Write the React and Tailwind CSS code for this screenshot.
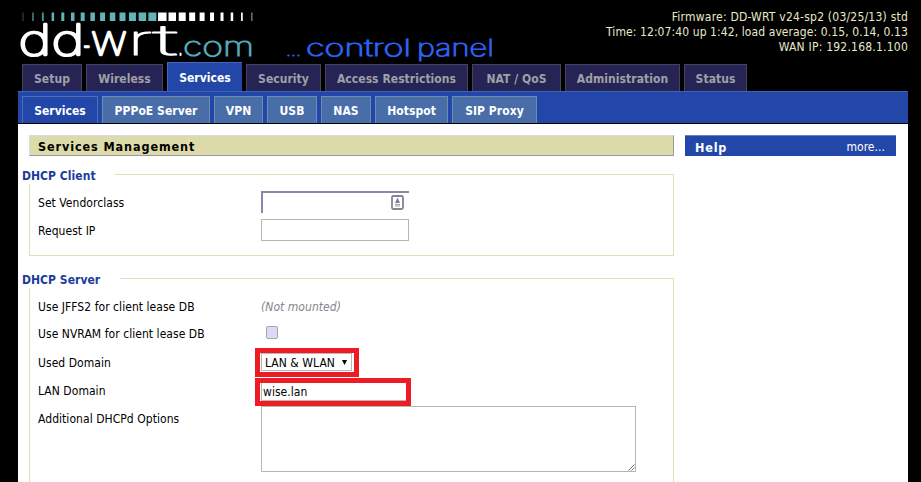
import React from "react";

const tabs = [
  ["Setup", "w-[60px]"],
  ["Wireless", "w-[77px]"],
  ["Services", "w-[75px]"],
  ["Security", "w-[75px]"],
  ["Access Restrictions", "w-[143px]"],
  ["NAT / QoS", "w-[89px]"],
  ["Administration", "w-[115px]"],
  ["Status", "w-[63px]"],
];

const subTabs = [
  ["Services", "w-[76px]"],
  ["PPPoE Server", "w-[108px]"],
  ["VPN", "w-[49px]"],
  ["USB", "w-[50px]"],
  ["NAS", "w-[50px]"],
  ["Hotspot", "w-[73px]"],
  ["SIP Proxy", "w-[85px]"],
];

// Bar widths of the strip above the wordmark, evenly pitched.
const bars = [1, 1.5, 2, 2.5, 3, 3.5, 4, 4.5, 5, 5.5, 6, 7, 7.5, 8, 8.5, 7.5, 7, 6, 5, 4, 3, 2.5, 1.7, 1.5];

function Logo() {
  return (
    <svg width="500" height="62" viewBox="0 0 500 62" className="shrink-0 overflow-visible" fontFamily="Inter, 'Liberation Sans', sans-serif" fontWeight="100">
      {bars.map((w, i) => (
        <rect
          key={i}
          x={23 + i * 9.95 - w / 2}
          y="12.5"
          width={w}
          height="8.5"
          fill={i < 14 ? "#62b4b8" : "#ffffff"}
          opacity={i === 0 || i === 23 ? 0.45 : i < 3 ? 0.75 : 1}
        />
      ))}
      <g fill="#fff" stroke="#fff" strokeWidth="2.3" strokeLinejoin="round">
        <text x="18.5" y="55" fontSize="41.5" textLength="66" lengthAdjust="spacingAndGlyphs">dd</text>
        <text x="83" y="56" fontSize="30" textLength="7.5" lengthAdjust="spacingAndGlyphs">-</text>
        <text x="91" y="55" fontSize="41.5" textLength="36" lengthAdjust="spacingAndGlyphs">w</text>
        <text x="127.5" y="55" fontSize="41.5" strokeWidth="1.2" textLength="25" lengthAdjust="spacingAndGlyphs">r</text>
        <text x="153" y="55" fontSize="41.5" strokeWidth="1.2" textLength="25" lengthAdjust="spacingAndGlyphs">t</text>
        <text x="178.5" y="55" fontSize="26" textLength="4" lengthAdjust="spacingAndGlyphs">.</text>
      </g>
      <text x="183" y="55.5" fontSize="26.5" fill="#55a8b8" stroke="#55a8b8" strokeWidth="1.2" textLength="71" lengthAdjust="spacingAndGlyphs">com</text>
      <g fill="#2a62f4" stroke="#2a62f4" strokeWidth="1.2">
        <text x="286" y="55.5" fontSize="18" textLength="15" lengthAdjust="spacingAndGlyphs">...</text>
        <text x="306" y="55.5" fontSize="22.5" textLength="105" lengthAdjust="spacingAndGlyphs">control</text>
        <text x="417" y="55.5" fontSize="22.5" textLength="77" lengthAdjust="spacingAndGlyphs">panel</text>
      </g>
    </svg>
  );
}

function Row({ label, height, children }) {
  return (
    <div className={"flex items-center " + height}>
      <div className="w-[223px] shrink-0">{label}</div>
      {children}
    </div>
  );
}

function CardIcon() {
  return (
    <svg width="13" height="15" viewBox="0 0 13 15" className="mr-[5px] mb-0.5">
      <rect x="1" y="1" width="11" height="13" rx="1.5" fill="#fff" stroke="#85858f" strokeWidth="1.8" />
      <path d="M6.5 2.5l2.5 5.5h-5z" fill="#7c7ca4" />
      <path d="M4 9.5h5M4 11h5" stroke="#a3a38c" strokeWidth="1.1" />
    </svg>
  );
}

export default function App() {
  return (
    <div className="h-[482px] w-[921px] overflow-hidden bg-black font-['DejaVu_Sans_Condensed','DejaVu_Sans',sans-serif] text-[12px] leading-[15px] tracking-[0.05px] [font-stretch:condensed] text-black">
      <header className="flex h-[62px] justify-between">
        <Logo />
        <div className="mr-[13px] pt-[10px] text-right text-[#e8e8c8]">
          <div className="tracking-[0.22px]">Firmware: DD-WRT v24-sp2 (03/25/13) std</div>
          <div className="tracking-[0.09px]">Time: 12:07:40 up 1:42, load average: 0.15, 0.14, 0.13</div>
          <div className="tracking-[0.22px]">WAN IP: 192.168.1.100</div>
        </div>
      </header>
      <nav className="flex h-[29px] items-end gap-1 pl-[22px] font-bold">
        {tabs.map(([name, w]) => (
          <div
            key={name}
            className={
              "flex shrink-0 items-center justify-center whitespace-nowrap border-t border-l " + w +
              (name === "Services"
                ? " h-[29px] border-[#4468bb] bg-[#2247a9] pt-0.5 text-white"
                : " h-[27px] border-r border-[#44445c] bg-[#252454] pt-[3px] text-[#a0a0a8]")
            }
          >
            {name}
          </div>
        ))}
      </nav>
      <main className="ml-[18px] h-[391px] w-[890px] bg-white">
        <nav className="flex h-[33px] items-end gap-1 border-t border-b border-t-[#3d62b8] border-b-black bg-[#2247a9] pl-1 font-bold text-white">
          {subTabs.map(([name, w], i) => (
            <div
              key={name}
              className={
                "flex h-[27px] shrink-0 items-center justify-center whitespace-nowrap border-t border-x pt-[3px] " + w +
                (i === 0 ? " border-[#4a70b5] bg-[#2247a9]" : " border-[#6a8fae] bg-[#486da9]")
              }
            >
              {name}
            </div>
          ))}
        </nav>
        <div className="flex gap-[11px] pt-[11px] pl-[11px]">
          <section className="w-[645px]">
            <h2 className="flex h-[21px] items-center border border-t-[#d8d8f0] border-l-[#d8d8f0] border-r-[#999aa0] border-b-[#999aa0] bg-[#dcdba9] pl-2 pt-0.5 text-[12.5px] font-bold tracking-[0.9px]">
              Services Management
            </h2>
            <div className="mt-[18px] h-[82px] border border-[#e0dfba]">
              <div className="-mt-2 -ml-2 h-[17px] w-[93px] bg-white pt-0.5 font-bold text-[#1c3c9c]">DHCP Client</div>
              <div className="pt-[5px] pl-2">
                <Row label="Set Vendorclass" height="h-7">
                  <div className="mb-0.5 flex h-[22px] w-[148px] items-center justify-end border-t-2 border-l-2 border-[#8888a8]">
                    <CardIcon />
                  </div>
                </Row>
                <Row label="Request IP" height="h-7">
                  <div className="mb-0.5 h-[22px] w-[148px] border border-[#b8b8aa]" />
                </Row>
              </div>
            </div>
            <div className="mt-[22px] h-[260px] border border-[#e0dfba]">
              <div className="-mt-2 -ml-2 h-[17px] w-[98px] bg-white pt-0.5 font-bold text-[#1c3c9c]">DHCP Server</div>
              <div className="pt-[5px] pl-2">
                <Row label="Use JFFS2 for client lease DB" height="h-7">
                  <i className="text-[#85858d]">(Not mounted)</i>
                </Row>
                <Row label="Use NVRAM for client lease DB" height="h-[27px]">
                  <div className="mb-[5px] ml-[5px] h-[13px] w-3 rounded-[2px] border border-[#aaa99b] bg-[#dadafd]" />
                </Row>
                <Row label="Used Domain" height="h-[30px]">
                  <div className="-ml-1.5 mb-px h-[29px] w-[104px] border-5 border-[#ed1c24] pl-px">
                    <div className="flex h-[18px] w-[91px] items-center justify-between border border-[#b8b8b0] pt-0.5 pr-1 pl-[3px]">
                      <span>LAN &amp; WLAN</span>
                      <svg width="5" height="5" viewBox="0 0 5 5" className="mb-0.5"><path d="M0 0h5L2.5 5z" /></svg>
                    </div>
                  </div>
                </Row>
                <Row label={<div className="pb-0.5">LAN Domain</div>} height="h-7">
                  <div className="-ml-1.5 h-7 w-[156px] border-5 border-[#ed1c24] pl-px">
                    <div className="flex h-[18px] items-center border-b border-l border-[#b8b8b0] pt-px pl-px">wise.lan</div>
                  </div>
                </Row>
                <div className="flex">
                  <div className="w-[223px] pt-1.5">Additional DHCPd Options</div>
                  <div className="flex h-[66px] w-[375px] items-end justify-end border border-[#b8b8aa]">
                    <svg width="7" height="7" viewBox="0 0 7 7" stroke="#77776c" fill="none"><path d="M0.5 6.5l6-6M3.5 6.5l3-3" /></svg>
                  </div>
                </div>
              </div>
            </div>
          </section>
          <aside className="w-[211px]">
            <h2 className="flex h-[21px] items-center justify-between border-t border-[#5f83cd] bg-[#2247a9] pt-0.5 pr-[11px] pl-2.5 text-white">
              <b className="text-[12.5px] tracking-[0.8px]">Help</b>
              <span>more...</span>
            </h2>
          </aside>
        </div>
      </main>
    </div>
  );
}
